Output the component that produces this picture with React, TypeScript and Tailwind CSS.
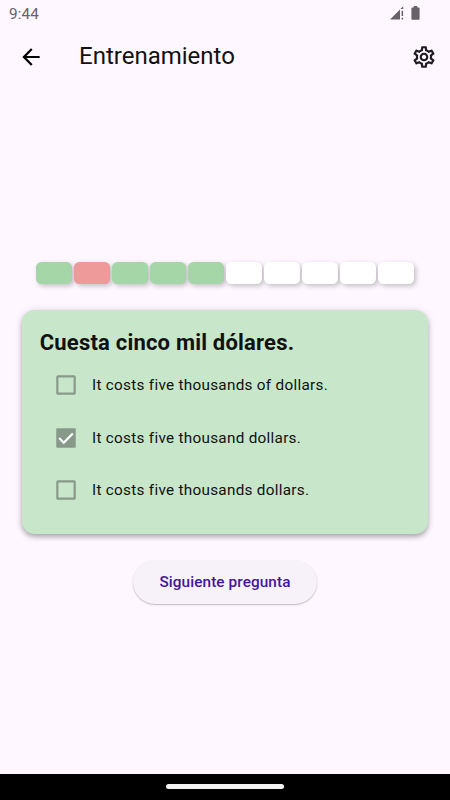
import { useState } from 'react'
import { MdArrowBack, MdOutlineSettings } from 'react-icons/md'

type Result = 'correct' | 'wrong' | 'pending'

const results: Result[] = [
  'correct', 'wrong', 'correct', 'correct', 'correct',
  'pending', 'pending', 'pending', 'pending', 'pending',
]

const segmentColors: Record<Result, string> = {
  correct: 'bg-[#a5d6a7]',
  wrong: 'bg-[#ef9a9a]',
  pending: 'bg-white',
}

const answers = [
  'It costs five thousands of dollars.',
  'It costs five thousand dollars.',
  'It costs five thousands dollars.',
]

function StatusBar() {
  return (
    <div className="flex h-[26.25px] items-center justify-between pl-[9px] pr-[30px] text-[#666268]">
      <span className="pt-0.5 text-[15.3px] leading-[18px] tracking-[0.1px]">9:44</span>
      <div className="flex items-center gap-[7px]">
        <svg width="14" height="14" viewBox="0 0 14 14" fill="currentColor">
          <path d="M0 13.5 10 3.5v10zM10.4 3.1 13.2.3v2.8z" />
          <path d="M11.6 4.7h1.5v5.2h-1.5zM11.6 11.8h1.5v1.7h-1.5z" />
        </svg>
        <svg width="9" height="14" viewBox="0 0 9 14" fill="currentColor">
          <path d="M2.7 0h3.6v1.4h1.3c.6 0 1 .4 1 1v10.4c0 .6-.4 1-1 1H1.4c-.6 0-1-.4-1-1V2.4c0-.6.4-1 1-1h1.3z" />
        </svg>
      </div>
    </div>
  )
}

function Checkbox({ checked }: { checked: boolean }) {
  return (
    <svg className="size-[26px] shrink-0" viewBox="0 0 24 24">
      {checked ? (
        <>
          <rect x="3" y="3" width="18" height="18" rx="1" fill="#879a89" />
          <path d="m5.7 12 4.2 4.3 8.4-8.5" fill="none" stroke="#fff" strokeWidth="2" />
        </>
      ) : (
        <rect x="4" y="4" width="16" height="16" rx="0.5" fill="none" stroke="#879a89" strokeWidth="2" />
      )}
    </svg>
  )
}

export default function App() {
  const [selected, setSelected] = useState(1)

  return (
    <div className="flex h-screen flex-col overflow-hidden bg-[#fef7ff] font-['Roboto',sans-serif] text-[#111]">
      <StatusBar />

      <header className="flex h-[61.25px] items-center pl-[18px] pr-[13px]">
        <button aria-label="Volver">
          <MdArrowBack className="size-[26px] text-black" />
        </button>
        <h1 className="ml-[35px] flex-1 pb-px text-[24px] leading-[30px]">Entrenamiento</h1>
        <button aria-label="Ajustes">
          <MdOutlineSettings className="size-[26px] text-[#1d1b20]" />
        </button>
      </header>

      <main className="flex flex-1 flex-col items-center pt-[174px]">
        <div className="flex gap-0.5">
          {results.map((result, i) => (
            <div
              key={i}
              className={`h-[22px] w-9 rounded-[5.5px] shadow-[2px_2px_5px_rgba(0,0,0,0.24)] ${segmentColors[result]}`}
            />
          ))}
        </div>

        <section className="mt-[26px] h-[224px] w-[406.5px] rounded-[13px] bg-[#c8e6c9] pl-[18px] pt-[18px] shadow-[0_3px_5px_rgba(0,0,0,0.26),0_1px_8px_rgba(0,0,0,0.12)]">
          <h2 className="text-[22px] font-bold leading-[30px] tracking-[0.2px]">Cuesta cinco mil dólares.</h2>
          <div className="mt-[1.5px] flex flex-col">
            {answers.map((answer, i) => (
              <button
                key={answer}
                onClick={() => setSelected(i)}
                className="flex h-[52.5px] items-center pl-[13px] text-left"
              >
                <Checkbox checked={selected === i} />
                <span className="ml-[13.25px] text-[15.3px] leading-5 tracking-[0.28px]">{answer}</span>
              </button>
            ))}
          </div>
        </section>

        <button className="mt-[26.5px] h-[43.75px] w-[183.5px] rounded-full bg-[#f7f2fa] pt-0.5 text-[15.3px] font-medium tracking-[0.11px] text-[#4314a0] shadow-[0_1px_1.5px_rgba(0,0,0,0.26)]">
          Siguiente pregunta
        </button>
      </main>

      <footer className="flex h-[26.5px] items-center justify-center bg-black">
        <div className="h-[5px] w-[118px] rounded-full bg-[#f2f2f2]" />
      </footer>
    </div>
  )
}
